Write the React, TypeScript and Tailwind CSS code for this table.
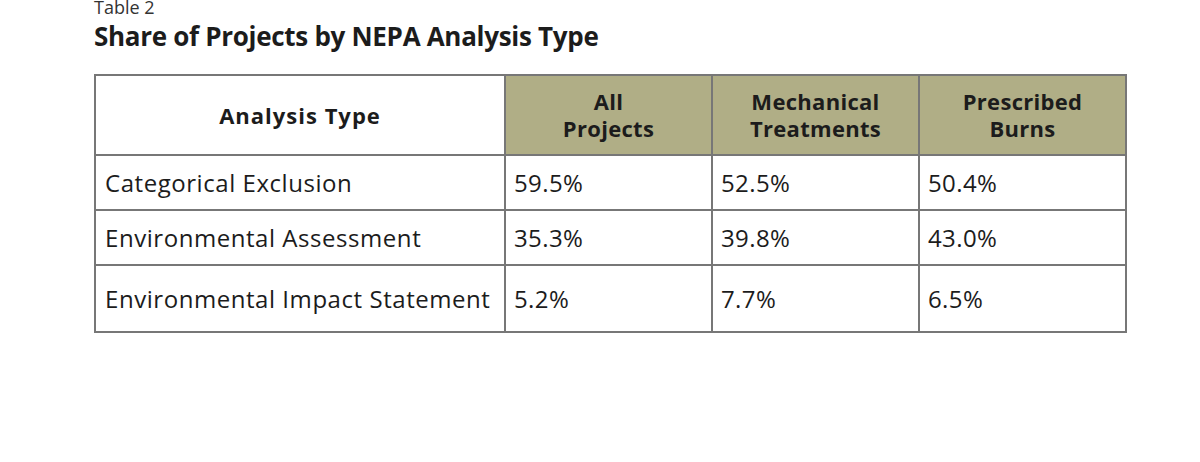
const headers = [
  ["All", "Projects"],
  ["Mechanical", "Treatments"],
  ["Prescribed", "Burns"],
];

const rows = [
  { type: "Categorical Exclusion", values: ["59.5%", "52.5%", "50.4%"], h: "h-[55px]" },
  { type: "Environmental Assessment", values: ["35.3%", "39.8%", "43.0%"], h: "h-[55px]" },
  { type: "Environmental Impact Statement", values: ["5.2%", "7.7%", "6.5%"], h: "h-[67px]" },
];

export default function App() {
  return (
    <div className="w-[1200px] h-[462px] bg-white overflow-hidden text-[#1c1c1c]" style={{ fontFamily: "'Open Sans', 'Liberation Sans', sans-serif" }}>
      <div className="pl-[94px]">
        <p className="text-[18px] leading-[17px] -mt-[1px] text-[#333]">Table 2</p>
        <h1 className="mt-[3px] text-[26px] leading-[34px] font-bold tracking-[-0.3px]">Share of Projects by NEPA Analysis Type</h1>
        <table className="mt-[21px] border-collapse border-2 border-[#777]">
          <thead>
            <tr className="h-[80px]">
              <th className="w-[410px] border-2 border-[#777] text-[22px] font-bold leading-[27px] tracking-[1px]">Analysis Type</th>
              {headers.map((h) => (
                <th key={h[0]} className="w-[207px] border-2 border-[#777] bg-[#b0ae86] text-[22px] font-bold leading-[27px] tracking-[0.3px]">
                  <div>{h[0]}</div>
                  <div>{h[1]}</div>
                </th>
              ))}
            </tr>
          </thead>
          <tbody>
            {rows.map((r) => (
              <tr key={r.type} className={r.h}>
                <td className="border-2 border-[#777] pl-[9px] text-[24px] tracking-[0.55px] text-left">{r.type}</td>
                {r.values.map((v, i) => (
                  <td key={i} className="border-2 border-[#777] pl-[8px] text-[24px] tracking-[0.4px] text-left">
                    {v}
                  </td>
                ))}
              </tr>
            ))}
          </tbody>
        </table>
      </div>
    </div>
  );
}
